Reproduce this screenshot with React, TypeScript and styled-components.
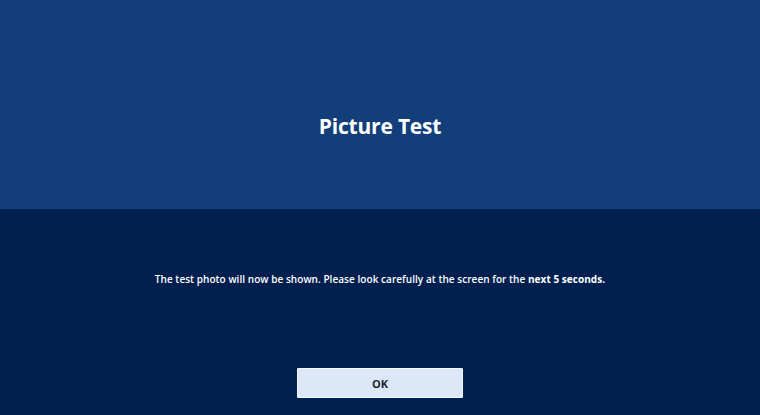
import styled, { createGlobalStyle } from "styled-components"

const GlobalStyle = createGlobalStyle`
    html, body {
        margin: 0;
        padding: 0;
        background: #02204f;
    }
    body {
        font-family: "Open Sans", "Liberation Sans", sans-serif;
    }
`

const Screen = styled.div`
    display: flex;
    flex-direction: column;
    width: 760px;
    height: 415px;
    overflow: hidden;
`

const Header = styled.div`
    display: flex;
    align-items: center;
    justify-content: center;
    height: 209px;
    background: #123e7a;
    padding-top: 42px;
    box-sizing: border-box;
`

const Title = styled.h1`
    margin: 0;
    font-size: 21px;
    font-weight: 700;
    color: #ffffff;
    letter-spacing: -0.2px;
`

const Body = styled.div`
    display: flex;
    flex-direction: column;
    align-items: center;
    flex: 1;
    background: #02204f;
    padding-top: 63px;
`

const Message = styled.p`
    margin: 0;
    font-size: 10px;
    font-weight: 600;
    color: #ffffff;
    line-height: 14px;
    letter-spacing: 0.05px;
    b {
        font-weight: 700;
    }
`

const OkButton = styled.button`
    margin-top: 82px;
    width: 166px;
    height: 30px;
    background: #dce8f8;
    border: 1px solid #f4f8ff;
    border-radius: 1px;
    color: #1d2233;
    font-family: "Open Sans", "Liberation Sans", sans-serif;
    font-size: 11px;
    font-weight: 700;
    cursor: pointer;
`

export default function App(){
    return(
        <Screen>
            <GlobalStyle />
            <Header>
                <Title>Picture Test</Title>
            </Header>
            <Body>
                <Message>
                    The test photo will now be shown. Please look carefully at the screen for the <b>next 5 seconds.</b>
                </Message>
                <OkButton>OK</OkButton>
            </Body>
        </Screen>
    )
}
